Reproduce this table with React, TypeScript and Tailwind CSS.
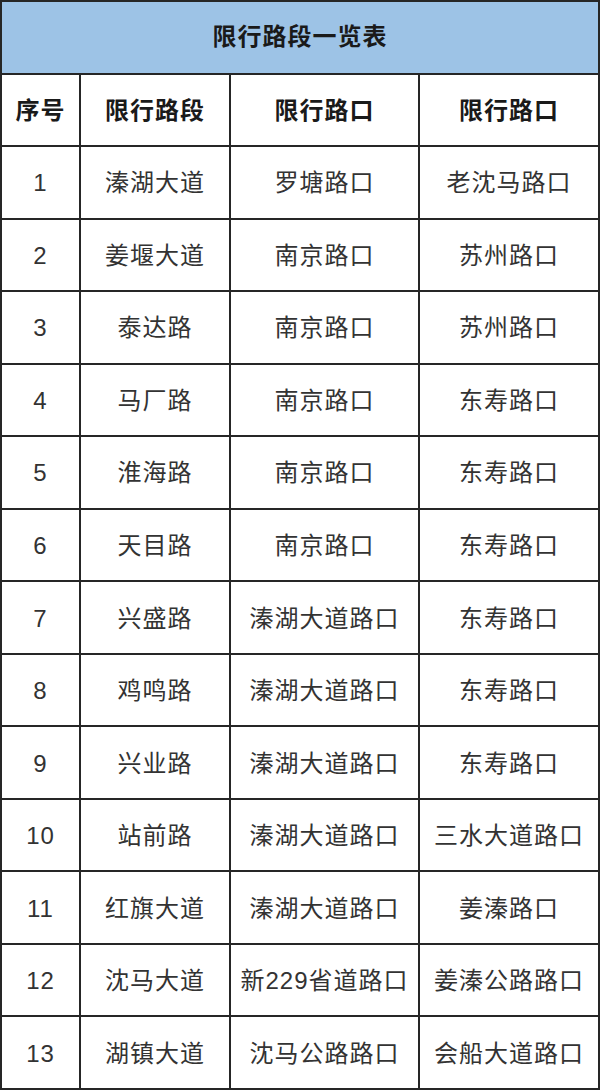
const rows: [string, string, string, string][] = [
  ["1", "溱湖大道", "罗塘路口", "老沈马路口"],
  ["2", "姜堰大道", "南京路口", "苏州路口"],
  ["3", "泰达路", "南京路口", "苏州路口"],
  ["4", "马厂路", "南京路口", "东寿路口"],
  ["5", "淮海路", "南京路口", "东寿路口"],
  ["6", "天目路", "南京路口", "东寿路口"],
  ["7", "兴盛路", "溱湖大道路口", "东寿路口"],
  ["8", "鸡鸣路", "溱湖大道路口", "东寿路口"],
  ["9", "兴业路", "溱湖大道路口", "东寿路口"],
  ["10", "站前路", "溱湖大道路口", "三水大道路口"],
  ["11", "红旗大道", "溱湖大道路口", "姜溱路口"],
  ["12", "沈马大道", "新229省道路口", "姜溱公路路口"],
  ["13", "湖镇大道", "沈马公路路口", "会船大道路口"],
]

const cell = "bg-white flex items-center justify-center whitespace-nowrap pt-[2px]"

export default function App() {
  return (
    <div
      className="w-[600px] h-[1090px] bg-[#262626] p-[2px] grid grid-cols-[77px_148px_187px_1fr] grid-rows-[repeat(15,1fr)] gap-[2px] text-[24px] text-[#333333] tracking-[1px]"
      style={{ fontFamily: '"Liberation Sans", "Noto Sans CJK SC", sans-serif' }}
    >
      <div className="col-span-4 bg-[#9dc3e6] flex items-center justify-center font-bold text-[#1a1a1a]">
        限行路段一览表
      </div>
      <div className={`${cell} font-bold text-[#1a1a1a]`}>序号</div>
      <div className={`${cell} font-bold text-[#1a1a1a]`}>限行路段</div>
      <div className={`${cell} font-bold text-[#1a1a1a]`}>限行路口</div>
      <div className={`${cell} font-bold text-[#1a1a1a]`}>限行路口</div>
      {rows.map((r) =>
        r.map((v, i) => (
          <div key={r[0] + "-" + i} className={cell}>
            {v}
          </div>
        ))
      )}
    </div>
  )
}
